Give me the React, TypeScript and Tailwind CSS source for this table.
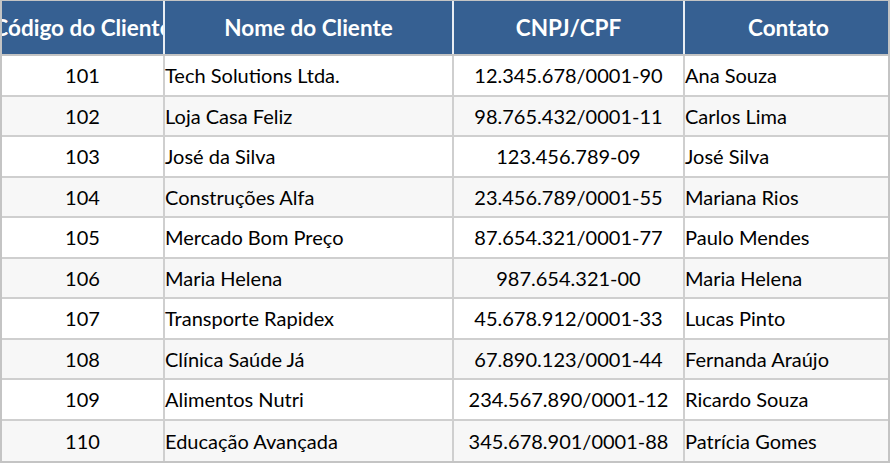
import React from 'react';

const rows = [
  { code: '101', name: 'Tech Solutions Ltda.', doc: '12.345.678/0001-90', contact: 'Ana Souza' },
  { code: '102', name: 'Loja Casa Feliz', doc: '98.765.432/0001-11', contact: 'Carlos Lima' },
  { code: '103', name: 'José da Silva', doc: '123.456.789-09', contact: 'José Silva' },
  { code: '104', name: 'Construções Alfa', doc: '23.456.789/0001-55', contact: 'Mariana Rios' },
  { code: '105', name: 'Mercado Bom Preço', doc: '87.654.321/0001-77', contact: 'Paulo Mendes' },
  { code: '106', name: 'Maria Helena', doc: '987.654.321-00', contact: 'Maria Helena' },
  { code: '107', name: 'Transporte Rapidex', doc: '45.678.912/0001-33', contact: 'Lucas Pinto' },
  { code: '108', name: 'Clínica Saúde Já', doc: '67.890.123/0001-44', contact: 'Fernanda Araújo' },
  { code: '109', name: 'Alimentos Nutri', doc: '234.567.890/0001-12', contact: 'Ricardo Souza' },
  { code: '110', name: 'Educação Avançada', doc: '345.678.901/0001-88', contact: 'Patrícia Gomes' },
];

const cols = 'grid grid-cols-[163px_289px_231px_207px]';

const App = () => {
  return (
    <div className="w-[892px] h-[463px] bg-white font-['Lato',sans-serif] text-black">
      <div className="w-[890px] border-l-2 border-b-2 border-r-2 border-[#c4c4c4]">
        {/* Header */}
        <div className={`${cols} h-[56px] bg-[#366092] text-white font-bold text-[22.5px] border-t border-[#c4c4c4] border-b-2`}>
          {['Código do Cliente', 'Nome do Cliente', 'CNPJ/CPF', 'Contato'].map((h, i) => (
            <div
              key={h}
              className={`flex items-center justify-center overflow-hidden whitespace-nowrap ${i < 3 ? 'border-r-2 border-[#e8edf3]' : ''}`}
            >
              {h}
            </div>
          ))}
        </div>

        {/* Body */}
        {rows.map((r, idx) => (
          <div
            key={r.code}
            className={`${cols} h-[40.5px] text-[20px] ${idx % 2 === 1 ? 'bg-[#f7f7f7]' : 'bg-white'} ${idx < rows.length - 1 ? 'border-b-2 border-[#cfcfcf]' : ''}`}
          >
            <div className="flex items-center justify-center border-r-2 border-[#cfcfcf]">{r.code}</div>
            <div className="flex items-center border-r-2 border-[#cfcfcf] whitespace-nowrap">{r.name}</div>
            <div className="flex items-center justify-center border-r-2 border-[#cfcfcf]">{r.doc}</div>
            <div className="flex items-center whitespace-nowrap">{r.contact}</div>
          </div>
        ))}
      </div>
    </div>
  );
};

export default App;
